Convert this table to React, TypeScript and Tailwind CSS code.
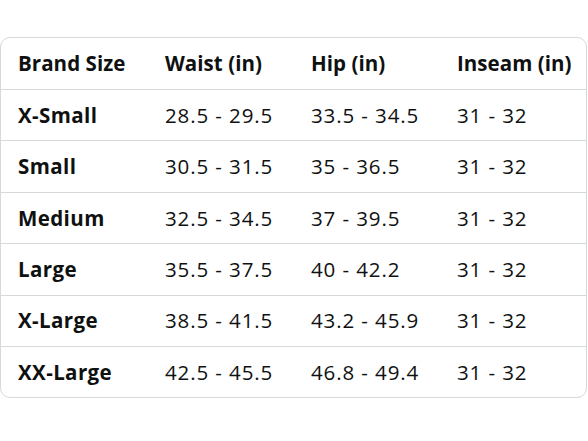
const header = ["Brand Size", "Waist (in)", "Hip (in)", "Inseam (in)"];

const rows = [
  ["X-Small", "28.5 - 29.5", "33.5 - 34.5", "31 - 32"],
  ["Small", "30.5 - 31.5", "35 - 36.5", "31 - 32"],
  ["Medium", "32.5 - 34.5", "37 - 39.5", "31 - 32"],
  ["Large", "35.5 - 37.5", "40 - 42.2", "31 - 32"],
  ["X-Large", "38.5 - 41.5", "43.2 - 45.9", "31 - 32"],
  ["XX-Large", "42.5 - 45.5", "46.8 - 49.4", "31 - 32"],
];

export default function App() {
  return (
    <div className="w-[588px] h-[441px] bg-white pt-[37px] text-[#0f1111] font-['Open_Sans',sans-serif]">
      <div className="w-[587px] border border-[#d5d9d9] rounded-[10px] overflow-hidden">
        <div className="grid grid-cols-[147px_146px_146px_1fr] h-[51px] items-center pl-[17px] text-[20.5px] font-bold tracking-[0.05px]">
          {header.map((h) => (
            <div key={h}>{h}</div>
          ))}
        </div>
        {rows.map((r) => (
          <div
            key={r[0]}
            className="grid grid-cols-[147px_146px_146px_1fr] h-[51.4px] items-center pl-[17px] text-[20.5px] tracking-[0.9px] border-t border-[#d5d9d9]"
          >
            <div className="font-bold tracking-[0.4px]">{r[0]}</div>
            <div>{r[1]}</div>
            <div>{r[2]}</div>
            <div>{r[3]}</div>
          </div>
        ))}
      </div>
    </div>
  );
}
